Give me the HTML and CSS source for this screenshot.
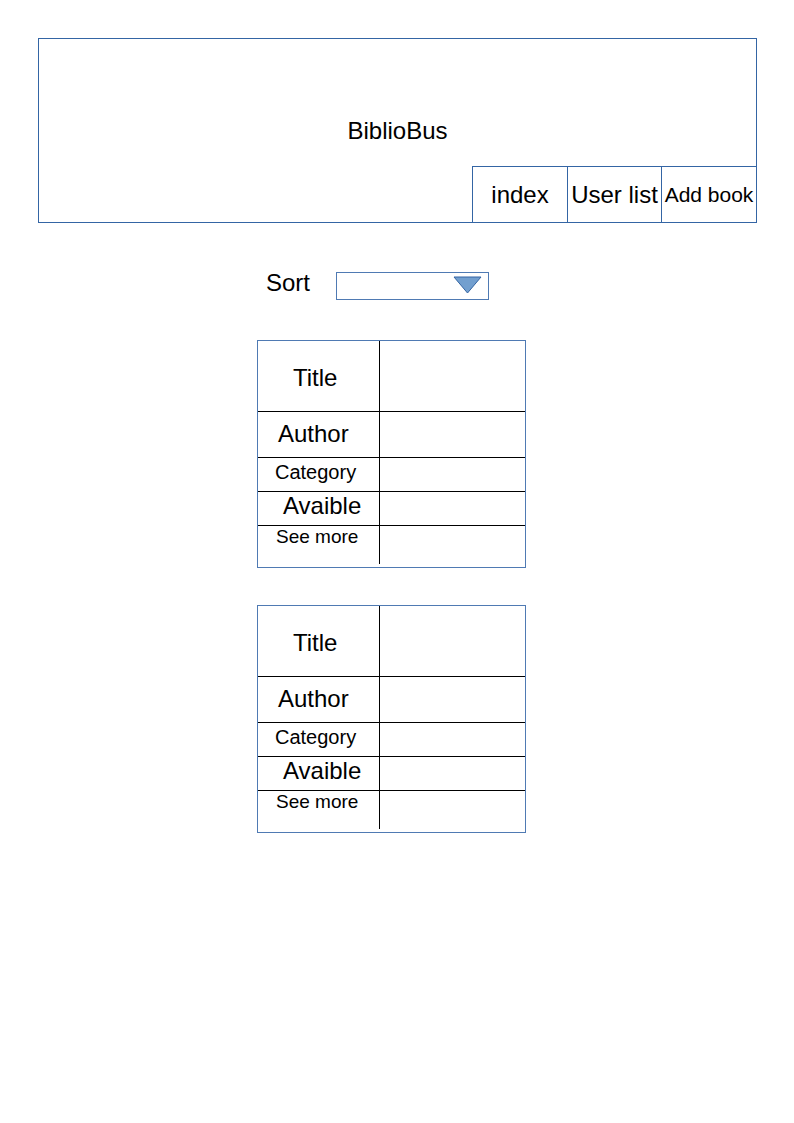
FILE: index.html
```html
<!DOCTYPE html>
<html lang="en">
<head>
<meta charset="utf-8">
<title>BiblioBus</title>
<link rel="stylesheet" href="styles.css">
</head>
<body>
<header class="header">
  <div class="brand">BiblioBus</div>
  <nav class="nav">
    <a class="nav-item">index</a>
    <a class="nav-item">User list</a>
    <a class="nav-item nav-item--small">Add book</a>
  </nav>
</header>

<div class="sort-row">
  <span class="sort-label">Sort</span>
  <div class="select">
    <svg class="select-arrow" width="29" height="18" viewBox="0 0 29 18">
      <polygon points="1,1 28,1 14.5,17" fill="#729fcf" stroke="#3465a4" stroke-width="1"/>
    </svg>
  </div>
</div>

<section class="card">
  <div class="row row--title"><div class="label label--title">Title</div><div class="value"></div></div>
  <div class="row row--author"><div class="label label--author">Author</div><div class="value"></div></div>
  <div class="row row--cat"><div class="label label--cat">Category</div><div class="value"></div></div>
  <div class="row row--avail"><div class="label label--avail">Avaible</div><div class="value"></div></div>
  <div class="row row--more"><div class="label label--more">See more</div><div class="value value--last"></div></div>
</section>

<section class="card card--second">
  <div class="row row--title"><div class="label label--title">Title</div><div class="value"></div></div>
  <div class="row row--author"><div class="label label--author">Author</div><div class="value"></div></div>
  <div class="row row--cat"><div class="label label--cat">Category</div><div class="value"></div></div>
  <div class="row row--avail"><div class="label label--avail">Avaible</div><div class="value"></div></div>
  <div class="row row--more"><div class="label label--more">See more</div><div class="value value--last"></div></div>
</section>
</body>
</html>
```

FILE: styles.css
```css
* { box-sizing: border-box; }

body {
  margin: 0;
  background: #ffffff;
  font-family: "Liberation Sans", Arial, sans-serif;
  color: #000000;
}

.header {
  margin: 38px 0 0 38px;
  width: 719px;
  height: 185px;
  border: 1px solid #3465a4;
  display: flex;
  flex-direction: column;
}

.brand {
  height: 127px;
  padding-top: 78px;
  font-size: 24px;
  line-height: 28px;
  text-align: center;
}

.nav {
  display: flex;
  justify-content: flex-end;
  height: 56px;
}

.nav-item {
  border-top: 1px solid #3465a4;
  border-left: 1px solid #3465a4;
  height: 56px;
  display: flex;
  align-items: center;
  justify-content: center;
  font-size: 24px;
  line-height: 28px;
  padding-top: 1px;
  width: 95px;
}

.nav-item:nth-child(2) { width: 94px; }

.nav-item--small {
  font-size: 21px;
  white-space: nowrap;
}

.sort-row {
  display: flex;
  align-items: flex-start;
  margin: 46px 0 0 266px;
}

.sort-label {
  font-size: 24px;
  line-height: 28px;
  width: 70px;
}

.select {
  margin-top: 3px;
  width: 153px;
  height: 28px;
  border: 1px solid #4f7ab3;
  display: flex;
  justify-content: flex-end;
  align-items: flex-start;
  padding: 3px 6px 0 0;
}

.select-arrow { display: block; }

.card {
  margin: 40px 0 0 257px;
  width: 269px;
  height: 228px;
  border: 1px solid #4f7ab3;
  display: flex;
  flex-direction: column;
}

.card--second { margin-top: 37px; }

.row {
  display: grid;
  grid-template-columns: 121px 1fr;
}

.row + .row { border-top: 1px solid #000000; }

.row--title { height: 70px; }
.row--author { height: 46px; }
.row--cat { height: 34px; }
.row--avail { height: 34px; }
.row--more { flex: 1; }

.value { border-left: 1px solid #000000; }
.value--last { margin-bottom: 3px; }

.label {
  display: flex;
  align-items: center;
  font-size: 24px;
  line-height: 28px;
  white-space: nowrap;
}

.label--title { padding: 4px 0 0 35px; }
.label--author { padding: 0 0 2px 20px; }
.label--cat { font-size: 20px; padding: 0 0 5px 17px; }
.label--avail { padding: 0 0 5px 25px; }
.label--more {
  align-items: flex-start;
  font-size: 19px;
  line-height: 22px;
  padding: 0 0 0 18px;
}
```
